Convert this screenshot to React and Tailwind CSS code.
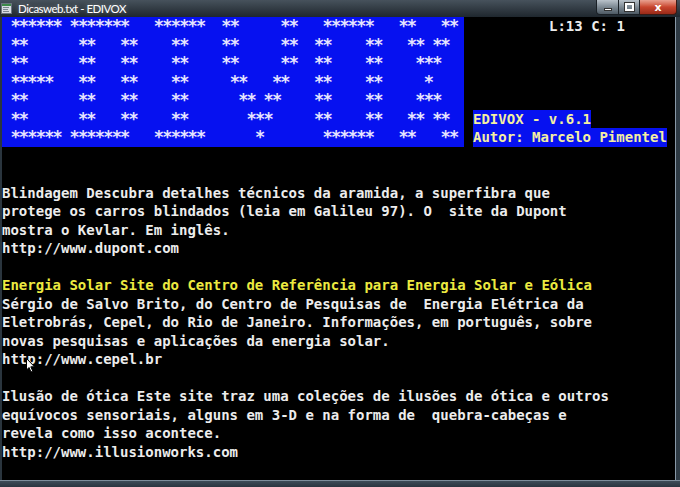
import React from "react";

const COLS = 55;
function artRow(ranges) {
  const a = Array(COLS).fill(" ");
  ranges.forEach(([s, e]) => {
    for (let i = s; i <= e; i++) a[i] = "*";
  });
  return a.join("");
}

const ART = [
  [[1, 6], [8, 14], [18, 23], [26, 27], [33, 34], [38, 43], [47, 48], [52, 53]],
  [[1, 2], [9, 10], [14, 15], [20, 21], [26, 27], [33, 34], [37, 38], [43, 44], [48, 49], [51, 52]],
  [[1, 2], [9, 10], [14, 15], [20, 21], [26, 27], [33, 34], [37, 38], [43, 44], [49, 51]],
  [[1, 5], [9, 10], [14, 15], [20, 21], [27, 28], [32, 33], [37, 38], [43, 44], [50, 50]],
  [[1, 2], [9, 10], [14, 15], [20, 21], [28, 29], [31, 32], [37, 38], [43, 44], [49, 51]],
  [[1, 2], [9, 10], [14, 15], [20, 21], [29, 31], [37, 38], [43, 44], [48, 49], [51, 52]],
  [[1, 6], [8, 14], [18, 23], [30, 30], [38, 43], [47, 48], [52, 53]],
].map(artRow);

const LINES = [
  { t: "" },
  { t: "" },
  { t: "Blindagem Descubra detalhes técnicos da aramida, a superfibra que" },
  { t: "protege os carros blindados (leia em Galileu 97). O  site da Dupont" },
  { t: "mostra o Kevlar. Em inglês." },
  { t: "http://www.dupont.com" },
  { t: "" },
  { t: "Energia Solar Site do Centro de Referência para Energia Solar e Eólica", y: true },
  { t: "Sérgio de Salvo Brito, do Centro de Pesquisas de  Energia Elétrica da" },
  { t: "Eletrobrás, Cepel, do Rio de Janeiro. Informações, em português, sobre" },
  { t: "novas pesquisas e aplicações da energia solar." },
  { t: "http://www.cepel.br" },
  { t: "" },
  { t: "Ilusão de ótica Este site traz uma coleções de ilusões de ótica e outros" },
  { t: "equívocos sensoriais, alguns em 3-D e na forma de  quebra-cabeças e" },
  { t: "revela como isso acontece." },
  { t: "http://www.illusionworks.com" },
];

export default function App() {
  return (
    <div className="relative w-[680px] h-[487px] overflow-hidden flex flex-col bg-[#26313a]">
      {/* Title bar */}
      <div className="h-[17px] flex items-start bg-gradient-to-b from-[#47525c] to-[#1f272e]">
        <svg width="11" height="11" viewBox="0 0 11 11" className="ml-[1px] mt-[3px]">
          <rect x="0.5" y="0.5" width="10" height="10" fill="#d8dde2" stroke="#6b7680" />
          <rect x="1" y="1" width="9" height="2" fill="#3d8a4a" />
          <rect x="2" y="4" width="6" height="1" fill="#7d8790" />
          <rect x="2" y="6" width="5" height="1" fill="#7d8790" />
          <rect x="2" y="8" width="6" height="1" fill="#7d8790" />
        </svg>
        <div className="ml-[6px] mt-[1px] text-[11.5px] tracking-[-0.5px] leading-[15px] text-white font-['Lato',sans-serif] [text-shadow:0_0_4px_rgba(255,255,255,0.35)]">
          Dicasweb.txt - EDIVOX
        </div>
        <div className="ml-auto mr-[3px] flex">
          <div className="w-[23px] h-[15px] rounded-bl-[4px] border border-t-0 border-[#1a2026] bg-gradient-to-b from-[#b9c2ca] via-[#7d8993] to-[#4e5a64] flex items-center justify-center">
            <div className="w-[8px] h-[3px] bg-white border border-[#333] mt-[5px]" />
          </div>
          <div className="w-[21px] h-[15px] border border-l-0 border-t-0 border-[#1a2026] bg-gradient-to-b from-[#b9c2ca] via-[#7d8993] to-[#4e5a64] flex items-center justify-center">
            <div className="w-[9px] h-[8px] border-2 border-white outline outline-1 outline-[#333]" />
          </div>
          <div className="w-[37px] h-[15px] rounded-br-[4px] border border-l-0 border-t-0 border-[#3a1a14] bg-gradient-to-b from-[#e8a090] via-[#c8452e] to-[#9a2a18] flex items-center justify-center text-white text-[11px] font-bold leading-none font-['DejaVu_Sans',sans-serif]">
            x
          </div>
        </div>
      </div>

      {/* Body */}
      <div className="flex-1 flex min-h-0">
        <div className="w-[2px] bg-[#2a353e]" />
        <div className="flex-1 bg-black font-['DejaVu_Sans_Mono',monospace] text-[14px] leading-[18.5px] whitespace-pre text-[#ececec] font-bold">
          <div className="flex">
            <div className="w-[462px] bg-[#0611f0] text-[#e6e4ff] text-[17px] tracking-[-1.8px]">
              {ART.map((r, i) => (
                <div key={i} className="h-[18.5px] leading-[18.5px]">
                  {r}
                </div>
              ))}
            </div>
            <div className="pl-[9px] flex flex-col">
              <div className="h-[18.5px] pl-[76px]">L:13 C: 1</div>
              <div className="h-[74px]" />
              <div className="bg-[#0611f0] text-[#f4efa2] self-start">
                <div className="h-[18.5px]">EDIVOX - v.6.1</div>
              </div>
              <div className="bg-[#0611f0] text-[#f4efa2] self-start">
                <div className="h-[18.5px]">Autor: Marcelo Pimentel</div>
              </div>
            </div>
          </div>
          {LINES.map((l, i) => (
            <div key={i} className={"h-[18.5px] " + (l.y ? "text-[#ecea40]" : "")}>
              {l.t}
            </div>
          ))}
        </div>
        <div className="w-[5px] border-l border-[#8898a6] bg-[#2e3a44]" />
      </div>
      <div className="h-[7px] border-t border-[#7e8e9c] bg-gradient-to-b from-[#3e4c58] to-[#2a3540]" />

      {/* mouse cursor */}
      <svg width="10" height="15" viewBox="0 0 10 15" className="absolute left-[26px] top-[358px]">
        <path d="M0.5 0.5 L0.5 12 L3 9.5 L5 14 L6.8 13.2 L4.8 8.8 L8.5 8.8 Z" fill="white" stroke="black" strokeWidth="1" />
      </svg>
    </div>
  );
}
